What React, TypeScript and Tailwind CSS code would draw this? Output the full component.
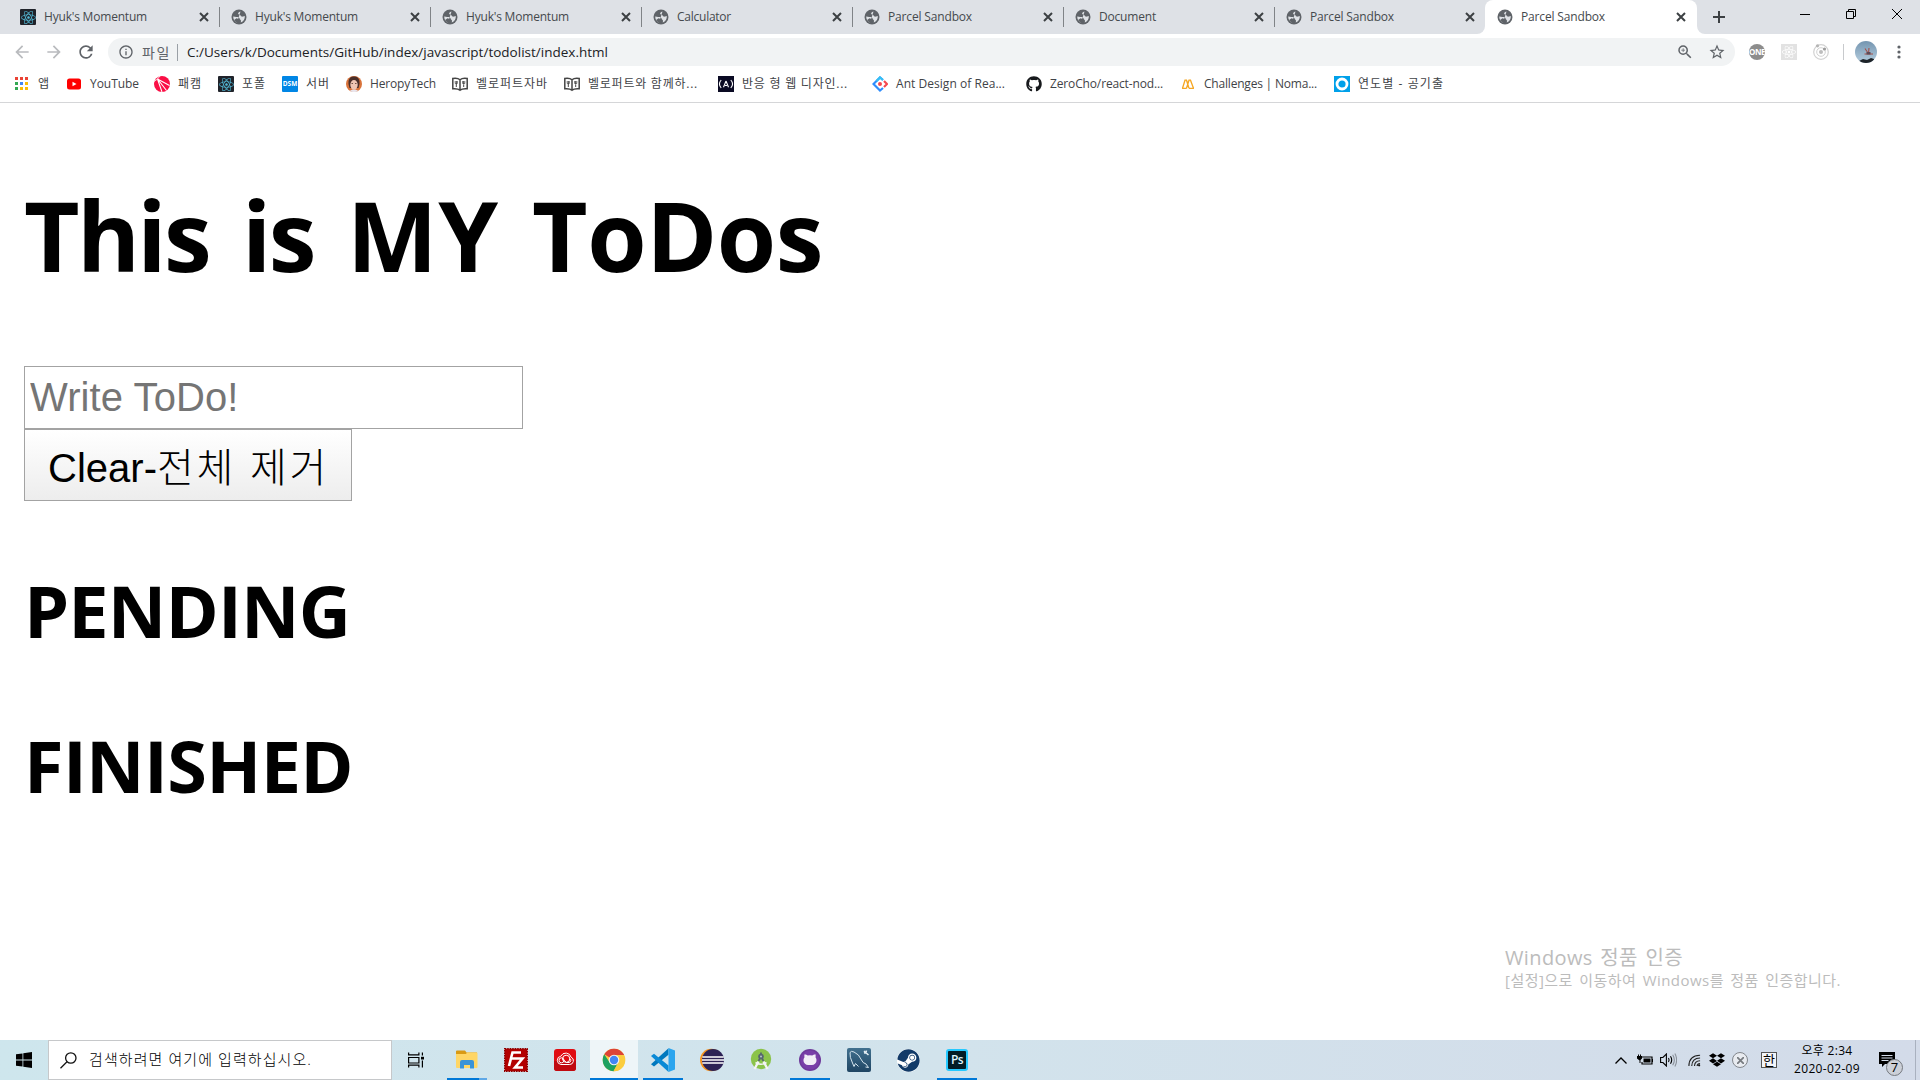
import { useLayoutEffect, useRef, type ReactNode } from "react";
import {
  MdArrowBack,
  MdArrowForward,
  MdRefresh,
  MdInfoOutline,
  MdZoomIn,
  MdStarBorder,
} from "react-icons/md";
import { FaGithub, FaDropbox, FaReact, FaSteam } from "react-icons/fa";

/* One line of text, tracked so that it fills exactly `w` pixels. */
function Fit({ w, children, className = "" }: { w: number; children: string; className?: string }) {
  const ref = useRef<HTMLSpanElement>(null);
  useLayoutEffect(() => {
    const el = ref.current;
    if (!el) return;
    el.style.letterSpacing = "0px";
    const natural = el.getBoundingClientRect().width;
    el.style.letterSpacing = `${(w - natural) / children.length}px`;
  }, [w, children]);
  return (
    <span ref={ref} className={`inline-block shrink-0 whitespace-pre ${className}`}>
      {children}
    </span>
  );
}

function Globe() {
  return (
    <svg width="16" height="16" viewBox="0 0 16 16" className="shrink-0">
      <circle cx="8" cy="8" r="7.500" fill="#5f6368" />
      <path
        d="M9.500 2.400C7.500 3 6.700 4.200 7.300 5c.6.8 2 .5 2.300 1.500.3 1 1.400 1.400 2.500 1l1.700-.5c.3 2.900-1.300 5.500-4 6.500.1-1.100.5-2-.4-2.800-.9-.8-.6-1.700-1.600-2.300C6.700 7.700 5.300 8 4 7.700L2.200 7.500c-.1 2.900 1.600 5 3.800 5.900"
        fill="#dfe2e6"
      />
      <path d="M5.500 9.300c1.300.2 2 .9 2.300 2l.3 2.600c-2.300 0-4-1.200-5-2.900z" fill="#5f6368" />
    </svg>
  );
}

function ReactBadge() {
  return (
    <span className="flex size-4 shrink-0 items-center justify-center rounded-[1px] bg-[#20232a]">
      <FaReact className="size-[15px] text-[#53b9d6]" />
    </span>
  );
}

function Cross({ size = 8, width = 2 }: { size?: number; width?: number }) {
  return (
    <svg width={size} height={size} viewBox="0 0 8 8" className="shrink-0 overflow-visible">
      <path d="M0 0 8 8M8 0 0 8" stroke="#3c4043" strokeWidth={(width * 8) / size} />
    </svg>
  );
}

const tabs = [
  { title: "Hyuk's Momentum", w: 103, react: true },
  { title: "Hyuk's Momentum", w: 103 },
  { title: "Hyuk's Momentum", w: 103 },
  { title: "Calculator", w: 54 },
  { title: "Parcel Sandbox", w: 84 },
  { title: "Document", w: 57 },
  { title: "Parcel Sandbox", w: 84 },
  { title: "Parcel Sandbox", w: 84, active: true },
];

function TabStrip() {
  return (
    <div className="flex h-[34px] shrink-0 bg-[#dee1e6] pl-2">
      {tabs.map((t, i) => (
        <div
          key={i}
          className={
            t.active
              ? "relative flex w-[212px] items-center rounded-t-lg bg-white pr-[12px] pl-3"
              : "relative flex w-[211px] items-center pr-[11px] pl-3"
          }
        >
          {t.react ? <ReactBadge /> : <Globe />}
          <Fit w={t.w} className="ml-2 text-[12px] leading-4 text-[#45494d]">
            {t.title}
          </Fit>
          <span className="mr-0 ml-auto flex">
            <Cross />
          </span>
          {i < 6 && <span className="absolute top-[7px] right-[-1px] h-5 w-px bg-[#808387]" />}
          {t.active && (
            <>
              <span className="absolute bottom-0 -left-2 size-2 overflow-hidden bg-white">
                <span className="block size-2 rounded-br-lg bg-[#dee1e6]" />
              </span>
              <span className="absolute -right-2 bottom-0 size-2 overflow-hidden bg-white">
                <span className="block size-2 rounded-bl-lg bg-[#dee1e6]" />
              </span>
            </>
          )}
        </div>
      ))}
      <div className="flex w-[44px] items-center justify-center">
        <svg width="12" height="12" viewBox="0 0 12 12">
          <path d="M6 0v12M0 6h12" stroke="#3c4043" strokeWidth="2" />
        </svg>
      </div>
      <div className="ml-auto flex h-7 items-center text-black">
        <span className="flex w-[46px] justify-center">
          <svg width="10" height="10" viewBox="0 0 10 10">
            <path d="M0 5.5h10" stroke="currentColor" />
          </svg>
        </span>
        <span className="flex w-[46px] justify-center">
          <svg width="10" height="10" viewBox="0 0 10 10" fill="none" stroke="currentColor">
            <path d="M.5 2.5h7v7h-7zM2.5 2.500v-2h7v7h-2" />
          </svg>
        </span>
        <span className="flex w-[46px] justify-center">
          <svg width="10" height="10" viewBox="0 0 10 10" stroke="currentColor">
            <path d="M0 0 10 10M10 0 0 10" />
          </svg>
        </span>
      </div>
    </div>
  );
}

function Toolbar() {
  return (
    <div className="flex h-8 shrink-0 items-end bg-white pl-3">
      <div className="flex h-7 w-24 items-center gap-3 text-[#5f6368]">
        <MdArrowBack className="size-5 text-[#b9bbbe]" />
        <MdArrowForward className="size-5 text-[#b9bbbe]" />
        <MdRefresh className="size-5" />
      </div>
      <div className="flex h-7 w-[1627px] items-center rounded-full bg-[#f1f3f4] pl-[10px]">
        <MdInfoOutline className="size-4 text-[#5f6368]" />
        <Fit w={29} className="ml-2 text-[14px] text-[#5f6368]">
          파일
        </Fit>
        <span className="ml-[6px] h-[17px] w-px bg-[#9aa0a6]" />
        <Fit w={421} className="ml-[9px] text-[13.5px] text-[#202124]">
          C:/Users/k/Documents/GitHub/index/javascript/todolist/index.html
        </Fit>
        <span className="mr-[9px] ml-auto flex items-center gap-[14px] text-[#5f6368]">
          <MdZoomIn className="size-[18px]" />
          <MdStarBorder className="size-[18px]" />
        </span>
      </div>
      <div className="flex h-7 items-center pl-[14px]">
        <span className="flex size-4 items-center justify-center overflow-hidden rounded-full bg-[#8c8c8c] text-[8px] font-bold tracking-[-0.5px] text-white">
          ONE
        </span>
        <span className="ml-4 flex size-4 items-center justify-center bg-[#e2e2e2]">
          <FaReact className="size-[14px] text-white" />
        </span>
        <svg className="ml-4" width="16" height="16" viewBox="0 0 16 16" fill="none">
          <circle cx="8" cy="8" r="7.3" stroke="#d2d2d2" strokeWidth="1.2" />
          <circle cx="8" cy="8" r="4.3" stroke="#d2d2d2" />
          <circle cx="8" cy="8" r="2" fill="#bdbdbd" />
          <circle cx="4.500" cy="1.800" r="1.600" fill="#b5b5b5" />
          <circle cx="11.500" cy="5" r="1.600" fill="#9b9b9b" />
        </svg>
        <span className="ml-[14px] h-4 w-px bg-[#c8cacd]" />
        <svg className="ml-[11px]" width="22" height="22" viewBox="0 0 22 22">
          <defs>
            <linearGradient id="sky" x1="0" y1="0" x2="0" y2="1">
              <stop offset="0" stopColor="#7495b0" />
              <stop offset="0.800" stopColor="#a9c3d6" />
            </linearGradient>
            <clipPath id="round">
              <circle cx="11" cy="11" r="11" />
            </clipPath>
          </defs>
          <g clipPath="url(#round)">
            <rect width="22" height="22" fill="url(#sky)" />
            <path d="M10 7.500l3 4.500M14 7l-.5 5.500M9.500 13h8.500" stroke="#a4504a" strokeWidth="1.100" />
            <path d="M11.500 11h4v2.500h-4z" fill="#5f4a55" />
            <path d="M4 20l4-2 4 1 4-2 3 1v4H4z" fill="#1d2328" />
          </g>
        </svg>
        <svg className="ml-5" width="4" height="14" viewBox="0 0 4 14" fill="#5f6368">
          <circle cx="2" cy="2" r="1.600" />
          <circle cx="2" cy="7" r="1.600" />
          <circle cx="2" cy="12" r="1.600" />
        </svg>
      </div>
    </div>
  );
}

function AppsIcon() {
  const colors = ["#ea4335", "#ea4335", "#ea4335", "#34a853", "#4285f4", "#fbbc05", "#34a853", "#fbbc05", "#fbbc05"];
  return (
    <svg width="16" height="16" viewBox="0 0 16 16">
      {colors.map((c, i) => (
        <rect key={i} x={1 + (i % 3) * 5} y={1 + Math.floor(i / 3) * 5} width="3" height="3" fill={c} />
      ))}
    </svg>
  );
}

function YouTubeIcon() {
  return (
    <svg width="16" height="16" viewBox="0 0 16 16">
      <rect x="1" y="2.500" width="14" height="11" rx="2.500" fill="#f00" />
      <path d="M6.500 5.700v4.600l4-2.300z" fill="#fff" />
    </svg>
  );
}

function PinkIcon() {
  return (
    <svg width="16" height="16" viewBox="0 0 16 16">
      <circle cx="8" cy="8" r="8" fill="#fa0f45" />
      <path d="M3.500 3 15.500 9.500M3.500 3 12.500 14.500M3.500 3 8 16" stroke="#fff" strokeWidth="1.100" />
      <path d="M0 5.500 3.500 3 6 0" fill="none" stroke="#fff" strokeWidth=".8" />
    </svg>
  );
}

function DsmIcon() {
  return (
    <span className="flex size-4 items-center justify-center rounded-[1px] bg-[#0086e5] text-[6.500px] font-bold text-white">
      DSM
    </span>
  );
}

function FaceIcon() {
  return (
    <svg width="16" height="16" viewBox="0 0 16 16">
      <circle cx="8" cy="8" r="8" fill="#d9733a" />
      <path d="M2.500 8C2 2 5 .5 8 .500S14 2 13.500 8l-1 4h-9z" fill="#4a2f2a" />
      <ellipse cx="8" cy="8.800" rx="3.700" ry="4.800" fill="#f0c6b4" />
      <path d="M4 15c1-2 7-2 8 0-2 1.400-6 1.400-8 0z" fill="#e9e6ee" />
      <path d="M5.500 7.500h1.500M9 7.500h1.500" stroke="#54372f" strokeWidth=".8" />
    </svg>
  );
}

function BookIcon() {
  return (
    <svg width="16" height="16" viewBox="0 0 16 16" fill="none" stroke="#444" strokeWidth="1.500">
      <path d="M.800 2.500C4 2 6.500 2.500 8 3.800 9.500 2.500 12 2 15.200 2.500v10.300C12 12.500 9.500 13 8 14.200 6.500 13 4 12.500.800 12.800zM8 3.800v10.400" />
      <path d="M4.300 5v3.200M4.300 8v3M11.700 5v3M11.700 8.300v2.700" strokeWidth="1" />
      <path d="M3.200 5v2.500h2.200V5M10.600 5v2.500h2.200V5" strokeWidth=".7" />
    </svg>
  );
}

function CampIcon() {
  return (
    <svg width="16" height="16" viewBox="0 0 16 16">
      <rect width="16" height="16" fill="#0a0a23" />
      <path
        d="M3.200 4C1 6.500 1 9.500 3.200 12M12.800 4C15 6.500 15 9.500 12.800 12M8 5 5.500 11.300M8 5l2.500 6.300M7 9.500h2"
        fill="none"
        stroke="#fff"
        strokeWidth="1.100"
      />
    </svg>
  );
}

function AntIcon() {
  return (
    <svg width="16" height="16" viewBox="0 0 16 16" fill="none" strokeWidth="2.200">
      <path d="M11 4 8 1.500 1.500 8 8 14.500l3-2.500" stroke="#2f8dfc" />
      <path d="M11 4 8 1.500 4.500 5" stroke="#35c0f5" />
      <path d="m12 5 3 3-3 3" stroke="#f5484f" />
      <circle cx="8" cy="8" r="2" fill="#f5484f" />
    </svg>
  );
}

function NomadIcon() {
  return (
    <svg width="16" height="16" viewBox="0 0 16 16" fill="none" stroke="#f5a623" strokeWidth="1.300">
      <path d="M2.500 12.300 5 4.200h1.500L9 12.300M6.500 12.300 9 4.200h1.500l3 8.100M2 12.300h4.500M9 12.300h5M6.500 4.200 8 8" />
    </svg>
  );
}

function RingIcon() {
  return (
    <svg width="16" height="16" viewBox="0 0 16 16">
      <rect width="16" height="16" fill="#00a0e9" />
      <circle cx="8" cy="8" r="5" fill="none" stroke="#fff" strokeWidth="2.800" />
    </svg>
  );
}

/* `slot` is the distance to the next bookmark. */
const bookmarks: { icon: ReactNode; label: string; w: number; slot: string }[] = [
  { icon: <AppsIcon />, label: "앱", w: 12, slot: "w-[52px]" },
  { icon: <YouTubeIcon />, label: "YouTube", w: 49, slot: "w-[88px]" },
  { icon: <PinkIcon />, label: "패캠", w: 24, slot: "w-[64px]" },
  { icon: <ReactBadge />, label: "포폴", w: 24, slot: "w-[64px]" },
  { icon: <DsmIcon />, label: "서버", w: 24, slot: "w-[64px]" },
  { icon: <FaceIcon />, label: "HeropyTech", w: 66, slot: "w-[106px]" },
  { icon: <BookIcon />, label: "벨로퍼트자바", w: 72, slot: "w-[112px]" },
  { icon: <BookIcon />, label: "벨로퍼트와 함께하...", w: 110, slot: "w-[154px]" },
  { icon: <CampIcon />, label: "반응 형 웹 디자인...", w: 106, slot: "w-[154px]" },
  { icon: <AntIcon />, label: "Ant Design of Rea...", w: 109, slot: "w-[154px]" },
  { icon: <FaGithub className="size-4 text-[#17191c]" />, label: "ZeroCho/react-nod...", w: 113, slot: "w-[154px]" },
  { icon: <NomadIcon />, label: "Challenges | Noma...", w: 113, slot: "w-[154px]" },
  { icon: <RingIcon />, label: "연도별 - 공기출", w: 86, slot: "w-[130px]" },
];

function Bookmarks() {
  return (
    <div className="flex h-[37px] shrink-0 items-center border-b border-[#d5d6d8] bg-white pl-[14px]">
      {bookmarks.map((b, i) => (
        <div key={i} className={`flex shrink-0 items-center ${b.slot}`}>
          <span className="mr-2 flex size-4 shrink-0">{b.icon}</span>
          <Fit w={b.w} className="text-[12px] leading-4 text-[#3f4347]">
            {b.label}
          </Fit>
        </div>
      ))}
    </div>
  );
}

function Page() {
  return (
    <main className="flex grow flex-col items-start bg-white pl-6 text-black">
      <h1 className="mt-[68px] flex h-[128px] gap-[33px] text-[96px] leading-[128px] font-[680]">
        <Fit w={185}>This</Fit>
        <Fit w={72}>is</Fit>
        <Fit w={152}>MY</Fit>
        <Fit w={291}>ToDos</Fit>
      </h1>
      <input
        placeholder="Write ToDo!"
        className="mt-[67px] h-[63px] w-[499px] border border-[#a3a3a3] px-[5px] font-['Liberation_Sans'] text-[40px] tracking-[0.1px] outline-none placeholder:text-[#757575]"
      />
      <button className="flex h-[72px] w-[328px] items-center border border-[#a3a3a3] bg-linear-to-b from-white to-[#ededed] pt-[6px] pl-[23px] font-['Liberation_Sans','Noto_Sans_CJK_KR',sans-serif] text-[40px]">
        <Fit w={109}>Clear-</Fit>
        <Fit w={172} className="font-light">
          전체 제거
        </Fit>
      </button>
      <h2 className="mt-[61px] h-24 text-[72px] leading-[96px] font-[680]">
        <Fit w={326}>PENDING</Fit>
      </h2>
      <h2 className="mt-[59px] h-24 text-[72px] leading-[96px] font-[680]">
        <Fit w={329}>FINISHED</Fit>
      </h2>
      <div className="mt-auto mb-[50px] ml-[1481px] flex flex-col items-start text-[#bcbcbc]">
        <Fit w={178} className="text-[20px] leading-[25px] [word-spacing:2px]">
          Windows 정품 인증
        </Fit>
        <Fit w={336} className="text-[15px] leading-5 [word-spacing:2px]">
          [설정]으로 이동하여 Windows를 정품 인증합니다.
        </Fit>
      </div>
    </main>
  );
}

function ExplorerIcon() {
  return (
    <svg width="22" height="20" viewBox="0 0 22 20">
      <path d="M0 1.500Q0 .5 1 .5h8l1.500 2H21v5H0z" fill="#d99a14" />
      <path d="M0 4h10l1-1.500h9.500q1 0 1 1V17q0 1-1 1H1q-1 0-1-1z" fill="#ffd666" />
      <path d="M4 18.500V12q0-2 2-2h10q2 0 2 2v6.500h-4V15H8v3.500z" fill="#3a93d8" />
    </svg>
  );
}

function FileZillaIcon() {
  return (
    <svg width="24" height="24" viewBox="0 0 24 24">
      <rect x=".7" y=".7" width="22.600" height="22.600" fill="#b30000" stroke="#8c0000" strokeWidth="1.400" strokeDasharray="1.500 1" />
      <path d="M5 18 8.500 4.500H17M7 10.500h6.500M11.500 10.500h7L11 19.500h8" fill="none" stroke="#fff" strokeWidth="2.600" />
    </svg>
  );
}

function CreativeCloudIcon() {
  return (
    <svg width="22" height="22" viewBox="0 0 22 22">
      <rect width="22" height="22" rx="3" fill="#e00c12" />
      <path d="M0 12h22v7q0 3-3 3H3q-3 0-3-3z" fill="#c0090f" />
      <g fill="none" stroke="#fff" strokeWidth="1">
        <path d="M7 15.500a4.200 4.200 0 0 1-.2-8.300 5.500 5.500 0 0 1 10.300 1 3.800 3.800 0 0 1-1.400 7.300z" />
        <circle cx="7.500" cy="11.300" r="2.500" />
        <circle cx="12.200" cy="9.800" r="3.600" />
        <path d="M8 9.500l4.500 4h2.500a2.200 2.200 0 0 0 .5-4.200" />
      </g>
    </svg>
  );
}

function ChromeIcon() {
  return (
    <svg width="24" height="24" viewBox="0 0 24 24">
      <circle cx="12" cy="12" r="11.300" fill="#fbcd3f" />
      <path d="M12 12 2.200 6.350A11.300 11.300 0 0 1 21.800 6.350L22 7H12z" fill="#dc4437" />
      <path d="M2.200 6.350A11.300 11.300 0 0 0 11.500 23.300L16.300 14.500 12 12 7.700 14.500 2.200 6.350z" fill="#1da160" />
      <path d="M12 7h9.900a11.300 11.300 0 0 1-10.400 16.300l4.800-8.800z" fill="#fbcd3f" />
      <circle cx="12" cy="12" r="5.300" fill="#f3f3f3" />
      <circle cx="12" cy="12" r="4.200" fill="#4386f4" />
    </svg>
  );
}

function VsCodeIcon() {
  return (
    <svg width="24" height="24" viewBox="0 0 24 24">
      <path d="M17.500 0v6.500L3 18.300l-3-2.200z" fill="#0078be" transform="translate(0 .2)" />
      <path d="M17.500 24v-6.500L3 5.700 0 7.900z" fill="#0a8ad6" />
      <path d="M17.500 0 24 2.500v19L17.500 24z" fill="#2ca5ee" />
    </svg>
  );
}

function EclipseIcon() {
  return (
    <svg width="24" height="24" viewBox="0 0 24 24">
      <circle cx="11.300" cy="12" r="11.300" fill="#f7941e" />
      <circle cx="13" cy="12" r="11" fill="#2c2255" />
      <path d="M2.300 9h21.400M2 12h22M2.300 15h21.400" stroke="#fff" strokeWidth="1.500" />
    </svg>
  );
}

function AndroidStudioIcon() {
  return (
    <svg width="22" height="24" viewBox="0 0 22 24">
      <circle cx="11" cy="11" r="10.200" fill="#8bc34a" />
      <path d="M8.500 13.500 4.500 21M13.500 13.500l4 7.500" stroke="#f4f4f4" strokeWidth="2.400" />
      <path d="M5.500 14.500q5.500 3.500 11 0" fill="none" stroke="#f4f4f4" strokeWidth="1.500" />
      <path d="M11 4.500v3M8.500 13 11 8.500l2.500 4.500" stroke="#57666f" strokeWidth="1.800" fill="none" />
      <circle cx="11" cy="8.500" r="2.800" fill="#57666f" />
      <circle cx="11" cy="8.500" r="1" fill="#b9c4ca" />
    </svg>
  );
}

function GitHubDesktopIcon() {
  return (
    <svg width="22" height="22" viewBox="0 0 22 22">
      <circle cx="11" cy="11" r="11" fill="#6e3a9b" />
      <circle cx="11" cy="11" r="9.500" fill="#793fa8" />
      <path
        d="M5.600 5.300c1.300.1 2.300.7 3 1.300q2.400-.5 4.800 0c.7-.6 1.700-1.200 3-1.300.4 1 .4 2 .1 2.900 1.200 1.500 1.300 3.600.5 5.200-1 2.200-3.500 2.700-6 2.700s-5-.5-6-2.700c-.8-1.600-.7-3.700.5-5.200-.3-.9-.3-1.900.1-2.900z"
        fill="#f2eef6"
      />
    </svg>
  );
}

function MySqlIcon() {
  return (
    <svg width="24" height="24" viewBox="0 0 24 24">
      <defs>
        <linearGradient id="sea" x1="0" y1="0" x2="0" y2="1">
          <stop offset="0" stopColor="#42718f" />
          <stop offset="1" stopColor="#1f4563" />
        </linearGradient>
      </defs>
      <rect width="24" height="24" rx="2" fill="url(#sea)" />
      <path
        d="M7 18.500 5.500 15Q2.500 9 3 4.500q1-2 4-.5 5 2 7.500 8 1 3 4.500 4l2.500 3.500-3-.5M7 18.500l1.500-3 3 3"
        fill="none"
        stroke="#d5e5ee"
        strokeWidth="1"
      />
      <path d="m17 3 4.500 4M17 5l2-.5.500-2" stroke="#e8f1f6" strokeWidth="1.500" />
    </svg>
  );
}

function SteamIcon() {
  return (
    <span className="flex size-[23px] items-center justify-center rounded-full bg-white">
      <FaSteam className="size-[23px] text-[#123a68]" />
    </span>
  );
}

function PhotoshopIcon() {
  return (
    <span className="flex size-[22px] items-center justify-center rounded-[3px] border-2 border-[#26c9ff] bg-[#021d26] text-[12px] leading-none font-semibold tracking-[-0.5px] text-[#dff6ff]">
      Ps
    </span>
  );
}

const apps: { icon: ReactNode; open?: boolean; active?: boolean; split?: boolean }[] = [
  { icon: <ExplorerIcon />, open: true, split: true },
  { icon: <FileZillaIcon /> },
  { icon: <CreativeCloudIcon /> },
  { icon: <ChromeIcon />, open: true, active: true },
  { icon: <VsCodeIcon />, open: true },
  { icon: <EclipseIcon /> },
  { icon: <AndroidStudioIcon /> },
  { icon: <GitHubDesktopIcon />, open: true },
  { icon: <MySqlIcon /> },
  { icon: <SteamIcon /> },
  { icon: <PhotoshopIcon />, open: true },
];

function Taskbar() {
  return (
    <footer className="flex h-10 shrink-0 bg-linear-to-r from-[#cee6ed] via-[#d2e3ec] to-[#d3dbe9]">
      <div className="flex w-12 items-center justify-center">
        <svg width="16" height="16" viewBox="0 0 16 16">
          <path d="M0 2.300 6.500 1.400v6.200H0zM7.300 1.300 16 0v7.600H7.300zM0 8.400h6.500v6.200L0 13.700zM7.300 8.400H16V16l-8.700-1.300z" />
        </svg>
      </div>
      <div className="flex w-[344px] items-center border border-[#c6c8ca] bg-white pl-[11px]">
        <svg width="17" height="17" viewBox="0 0 17 17" fill="none" stroke="#111" strokeWidth="1.300">
          <circle cx="10.800" cy="6" r="5.200" />
          <path d="M7 9.800.500 16.300" />
        </svg>
        <Fit w={223} className="-mt-px ml-3 text-[15px] font-light text-black">
          검색하려면 여기에 입력하십시오.
        </Fit>
      </div>
      <div className="flex w-[51px] items-center pl-4">
        <svg width="16" height="16" viewBox="0 0 16 16" fill="none" stroke="#000" strokeWidth="1.200">
          <path d="M.600 5.500h10.300v5.500H.600zM.600.500v2.400h10.300V.500M.600 15.500v-2.300h10.300v2.300M14.400.500v3M14.400 8.500v7" />
          <path d="M13 4.800h3v2.700h-3z" fill="#000" stroke="none" />
        </svg>
      </div>
      <div className="flex gap-px">
        {apps.map((a, i) => (
          <div key={i} className={`relative flex w-12 items-center justify-center ${a.active ? "bg-[#eef5f8]" : ""}`}>
            {a.icon}
            {a.open && (
              <span
                className={`absolute bottom-0 flex h-[2px] bg-[#0078d7] ${a.active ? "inset-x-0" : "inset-x-1"}`}
              >
                {a.split && <span className="ml-auto w-2 bg-[#5fa8e6]" />}
              </span>
            )}
          </div>
        ))}
      </div>
      <div className="ml-auto flex items-center text-black">
        <svg width="12" height="7" viewBox="0 0 12 7" fill="none" stroke="#000" strokeWidth="1.300">
          <path d="m.500 6.500 5.500-5.500 5.500 5.500" />
        </svg>
        <svg className="ml-[10px]" width="16" height="12" viewBox="0 0 16 12">
          <path d="M4.500 3h10.500v7h-10V8" fill="none" stroke="#000" strokeWidth="1.200" />
          <path d="M6.500 4.500h7v4h-7zM15 5h1v3h-1zM0 2h5v2.500L3.500 6v3h-1V6.500L0 4.500zM1 .500h1v2H1zM3 .500h1v2H3z" />
        </svg>
        <svg className="ml-[7px]" width="17" height="14" viewBox="0 0 17 14" fill="none" stroke="#000" strokeWidth="1.100">
          <path d="M.6 4.500h2.300L6.400 1v12L2.900 9.500H.600z" />
          <path d="M8.500 5q1.200 2 0 4M10.500 3.300q2.400 3.700 0 7.400" />
          <path d="M12.700 1.800q3.300 5.200 0 10.400M14.900.500q3.500 6.500 0 13" stroke="#8b929b" />
        </svg>
        <svg className="ml-[11px]" width="13" height="13" viewBox="0 0 14 13" fill="none" stroke="#222" strokeWidth="1.200">
          <path d="M1 12.500Q1 1 13 .800M4 12.500Q4.200 4 13 3.800M7 12.500q.2-5.500 6-5.700M9.800 12.500q.2-2.500 3.200-2.700" />
          <circle cx="12" cy="11.700" r="1.200" fill="#111" stroke="none" />
        </svg>
        <FaDropbox className="ml-[8px] size-4" />
        <span className="ml-[7px] flex size-4 items-center justify-center rounded-full border border-[#82868c] bg-[#e8ebf0]">
          <svg width="7" height="7" viewBox="0 0 8 8">
            <path d="M0 0 8 8M8 0 0 8" stroke="#777b80" strokeWidth="2" />
          </svg>
        </span>
        <span className="ml-[13px] flex size-4 items-center justify-center border border-[#555] bg-[#f3f5f9] text-[13px] leading-none">
          한
        </span>
        <div className="ml-4 flex w-[68px] flex-col items-center">
          <Fit w={51} className="text-[12px] leading-[18px]">
            오후 2:34
          </Fit>
          <Fit w={66} className="text-[12px] leading-[18px]">
            2020-02-09
          </Fit>
        </div>
        <div className="relative ml-[18px] h-4 w-9">
          <svg width="16" height="16" viewBox="0 0 16 16">
            <path d="M0 0h16v12H6l-3 3v-3H0z" />
            <path d="M2.500 3.500h11M2.500 6h11M2.500 8.500h7" stroke="#d3dbe9" />
          </svg>
          <span className="absolute top-[7px] left-[7px] flex size-[17px] items-center justify-center rounded-full border border-[#75797f] bg-[#ccd0d8] text-[13px] leading-none">
            7
          </span>
        </div>
        <span className="h-10 w-px bg-[#a9b1bf]" />
        <span className="w-1" />
      </div>
    </footer>
  );
}

export default function App() {
  return (
    <div className="flex h-[1080px] w-[1920px] flex-col overflow-hidden bg-white font-['Open_Sans','Noto_Sans_CJK_KR',sans-serif]">
      <TabStrip />
      <Toolbar />
      <Bookmarks />
      <Page />
      <Taskbar />
    </div>
  );
}
